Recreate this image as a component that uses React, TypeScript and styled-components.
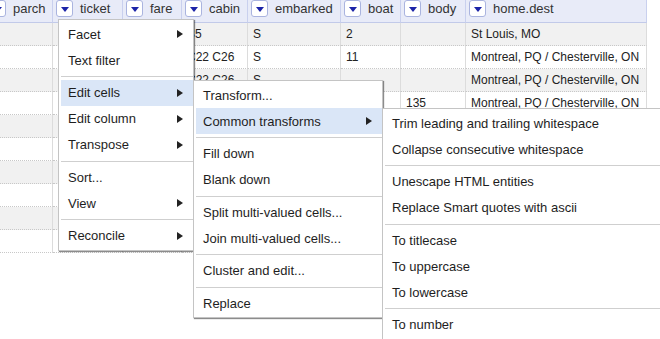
import styled, { createGlobalStyle } from "styled-components";

const GlobalStyle = createGlobalStyle`
  html, body {
    margin: 0;
    padding: 0;
    overflow: hidden;
    background: #fff;
  }
  body {
    font-family: "Liberation Sans", Arial, sans-serif;
    font-size: 13px;
    color: #222;
  }
`;

const columns = [
  { name: "parch", width: 67 },
  { name: "ticket", width: 70 },
  { name: "fare", width: 59 },
  { name: "cabin", width: 66 },
  { name: "embarked", width: 93 },
  { name: "boat", width: 60 },
  { name: "body", width: 65 },
  { name: "home.dest", width: 181 },
];

const rows = [
  ["", "24160", "211.3375", "B5", "S", "2", "", "St Louis, MO"],
  ["", "113781", "151.55", "C22 C26", "S", "11", "", "Montreal, PQ / Chesterville, ON"],
  ["", "113781", "151.55", "C22 C26", "S", "", "", "Montreal, PQ / Chesterville, ON"],
  ["", "113781", "151.55", "C22 C26", "S", "", "135", "Montreal, PQ / Chesterville, ON"],
  ["", "113781", "151.55", "C22 C26", "S", "", "", "Montreal, PQ / Chesterville, ON"],
  ["", "19952", "26.55", "E12", "S", "3", "", "New York, NY"],
  ["", "13502", "77.9583", "D7", "S", "10", "", "Hudson, NY"],
  ["", "112050", "0", "A36", "S", "", "", "Belfast, NI"],
  ["", "11769", "51.4792", "C101", "S", "D", "", "Bayside, Queens, NY"],
  ["", "PC 17609", "49.5042", "", "C", "", "22", "Montevideo, Uruguay"],
];

type Entry = { label: string; sub?: boolean; active?: boolean } | "sep";

const columnMenu: Entry[] = [
  { label: "Facet", sub: true },
  { label: "Text filter" },
  "sep",
  { label: "Edit cells", sub: true, active: true },
  { label: "Edit column", sub: true },
  { label: "Transpose", sub: true },
  "sep",
  { label: "Sort..." },
  { label: "View", sub: true },
  "sep",
  { label: "Reconcile", sub: true },
];

const editCellsMenu: Entry[] = [
  { label: "Transform..." },
  { label: "Common transforms", sub: true, active: true },
  "sep",
  { label: "Fill down" },
  { label: "Blank down" },
  "sep",
  { label: "Split multi-valued cells..." },
  { label: "Join multi-valued cells..." },
  "sep",
  { label: "Cluster and edit..." },
  "sep",
  { label: "Replace" },
];

const transformsMenu: Entry[] = [
  { label: "Trim leading and trailing whitespace" },
  { label: "Collapse consecutive whitespace" },
  "sep",
  { label: "Unescape HTML entities" },
  { label: "Replace Smart quotes with ascii" },
  "sep",
  { label: "To titlecase" },
  { label: "To uppercase" },
  { label: "To lowercase" },
  "sep",
  { label: "To number" },
];

const Menu = ({ items, left, top, width }: IMenuProps) => (
  <MenuBox $left={left} $top={top} $width={width}>
    {items.map((item, i) =>
      item === "sep" ? (
        <Separator key={i} />
      ) : (
        <MenuItem key={i} $active={item.active}>
          <span>{item.label}</span>
          {item.sub && <Arrow />}
        </MenuItem>
      )
    )}
  </MenuBox>
);

const App = () => {
  return (
    <Page>
      <GlobalStyle />
      <Grid $cols={columns.map((c) => c.width + "px").join(" ")}>
        {columns.map((c) => (
          <HeaderCell key={c.name}>
            <DropButton>
              <DownTriangle />
            </DropButton>
            <HeaderName>{c.name}</HeaderName>
          </HeaderCell>
        ))}
        {rows.map((row, r) =>
          row.map((value, c) => (
            <Cell key={r + "-" + c} $odd={r % 2 === 0}>
              {value}
            </Cell>
          ))
        )}
      </Grid>
      <Menu items={columnMenu} left={58} top={19} width={136} />
      <Menu items={editCellsMenu} left={193} top={80} width={190} />
      <Menu items={transformsMenu} left={382} top={108} width={300} />
    </Page>
  );
};

export default App;

const Page = styled.div`
  position: relative;
  width: 660px;
  height: 339px;
  overflow: hidden;
  background: #fff;
`;

const Grid = styled.div<{ $cols: string }>`
  display: grid;
  grid-template-columns: ${(p) => p.$cols};
  margin-left: -14px;
  width: max-content;
`;

const HeaderCell = styled.div`
  box-sizing: border-box;
  height: 23px;
  display: flex;
  align-items: flex-start;
  gap: 7px;
  padding-left: 3px;
  background: #e8ebf8;
  border-right: 1px solid #c9d0ee;
  border-bottom: 1px solid #c2cae9;
  white-space: nowrap;
  overflow: hidden;
`;

const DropButton = styled.div`
  box-sizing: border-box;
  flex: none;
  width: 17px;
  height: 17px;
  display: flex;
  align-items: center;
  justify-content: center;
  background: #fff;
  border: 1px solid #aab4df;
  border-radius: 3px;
`;

const DownTriangle = styled.div`
  width: 0;
  height: 0;
  border-left: 4px solid transparent;
  border-right: 4px solid transparent;
  border-top: 5px solid #1c24a8;
  margin-top: 1px;
`;

const HeaderName = styled.span`
  line-height: 17px;
  color: #333;
`;

const Cell = styled.div<{ $odd: boolean }>`
  box-sizing: border-box;
  height: 23px;
  line-height: 22px;
  padding-left: 5px;
  font-size: 12px;
  background: ${(p) => (p.$odd ? "#f1f1f1" : "#fff")};
  border-right: 1px solid #dcdcdc;
  border-bottom: 1px dotted #c8c8c8;
  white-space: nowrap;
  overflow: hidden;
  color: #222;
`;

const MenuBox = styled.div<{ $left: number; $top: number; $width: number }>`
  position: absolute;
  left: ${(p) => p.$left}px;
  top: ${(p) => p.$top}px;
  width: ${(p) => p.$width}px;
  box-sizing: border-box;
  padding: 1px 0 1px 2px;
  background: #fff;
  border: 1px solid #c4c4c4;
  box-shadow: 1px 1px 1px rgba(0, 0, 0, 0.45);
`;

const MenuItem = styled.div<{ $active?: boolean }>`
  height: 26px;
  display: flex;
  align-items: center;
  justify-content: space-between;
  padding: 0 10px 0 7px;
  background: ${(p) => (p.$active ? "#dae6f7" : "transparent")};
  color: #1e1e1e;
  white-space: nowrap;
`;

const Arrow = styled.div`
  width: 0;
  height: 0;
  border-top: 4.5px solid transparent;
  border-bottom: 4.5px solid transparent;
  border-left: 6px solid #222;
`;

const Separator = styled.div`
  height: 1px;
  margin: 3px 0 2.5px;
  background: #cfcfcf;
`;

interface IMenuProps {
  items: Entry[];
  left: number;
  top: number;
  width: number;
}
